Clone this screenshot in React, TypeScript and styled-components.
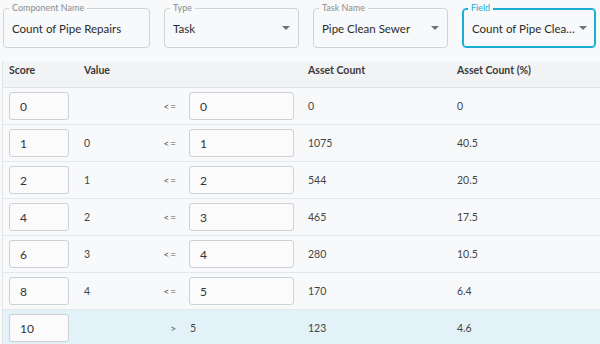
import React from 'react'
import styled, {createGlobalStyle} from 'styled-components'

const GlobalStyle = createGlobalStyle`
  html, body {
    margin: 0;
    padding: 0;
    background: #f8f9fa;
    font-family: Lato, 'Open Sans', sans-serif;
    color: #333;
  }
`

const Page = styled.div`
  width: 600px;
  height: 344px;
  overflow: hidden;
  background: #f8f9fa;
`

const FieldBar = styled.div`
  display: flex;
  gap: 14px;
  padding: 8px 3px 0 3px;
  height: 62px;
  box-sizing: border-box;
`

const FieldBox = styled.div<{$width: number; $active?: boolean}>`
  position: relative;
  width: ${(p) => p.$width}px;
  height: 40px;
  box-sizing: border-box;
  border: 1px solid ${(p) => (p.$active ? '#1aaed3' : '#cfd2d6')};
  box-shadow: ${(p) => (p.$active ? 'inset 0 0 0 1px #1aaed3' : 'none')};
  border-radius: 4px;
  display: flex;
  align-items: center;
  padding: 0 6px 0 ${(p) => (p.$active ? 9 : 8)}px;
  background: #f8f9fa;
`

const FieldLabel = styled.span<{$active?: boolean}>`
  position: absolute;
  top: -7px;
  left: 5px;
  padding: 0 3px;
  background: #f8f9fa;
  font-size: 9px;
  line-height: 12px;
  color: ${(p) => (p.$active ? '#1aaed3' : '#8a8d91')};
`

const FieldValue = styled.span`
  flex: 1;
  min-width: 0;
  font-size: 11.5px;
  color: #2b2b2b;
  white-space: nowrap;
  overflow: hidden;
  text-overflow: ellipsis;
  padding-top: 1px;
`

const Caret = styled.span`
  flex: none;
  width: 0;
  height: 0;
  border-left: 4px solid transparent;
  border-right: 4px solid transparent;
  border-top: 4px solid #6f7276;
  margin-left: 3px;
  margin-right: 2px;
`

const Table = styled.div`
  margin-left: 2px;
  border-left: 1px solid #e3e4e6;
`

const cols = '75px 76px 29px 119px 149px 1fr'

const HeaderRow = styled.div`
  display: grid;
  grid-template-columns: ${cols};
  align-items: start;
  height: 26px;
  box-sizing: border-box;
  padding: 2px 0 0 6px;
  line-height: 13px;
  background: #f2f3f4;
  border-bottom: 1px solid #e1e2e4;
  font-size: 10.5px;
  font-weight: 700;
  color: #3a3a3a;
`

const Row = styled.div<{$highlight?: boolean}>`
  display: grid;
  grid-template-columns: ${cols};
  align-items: center;
  height: 37px;
  box-sizing: border-box;
  padding-left: 6px;
  background: ${(p) => (p.$highlight ? '#e3f1f8' : '#f8f9fa')};
  border-bottom: 1px solid ${(p) => (p.$highlight ? 'transparent' : '#e6e7e9')};
  font-size: 10.5px;
  color: #444;
`

const Cell = styled.div`
  white-space: nowrap;
`

const Operator = styled.div`
  font-size: 10px;
  color: #555;
  text-align: right;
  padding-right: 12px;
  letter-spacing: 1px;
`

const InputBox = styled.div<{$width: number}>`
  width: ${(p) => p.$width}px;
  height: 28px;
  box-sizing: border-box;
  border: 1px solid #cdd0d4;
  border-radius: 3px;
  background: #fbfbfc;
  display: flex;
  align-items: center;
  padding-left: 10px;
  font-size: 12px;
  color: #333;
`

const PlainValue = styled.div`
  font-size: 10.5px;
  color: #444;
  padding-left: 1px;
`

const fields = [
  {label: 'Component Name', value: 'Count of Pipe Repairs', width: 147},
  {label: 'Type', value: 'Task', width: 135, select: true},
  {label: 'Task Name', value: 'Pipe Clean Sewer', width: 135, select: true},
  {label: 'Field', value: 'Count of Pipe Clean Sewer', width: 134, select: true, active: true},
]

const rows = [
  {score: '0', value: '', max: '0', count: '0', pct: '0'},
  {score: '1', value: '0', max: '1', count: '1075', pct: '40.5'},
  {score: '2', value: '1', max: '2', count: '544', pct: '20.5'},
  {score: '4', value: '2', max: '3', count: '465', pct: '17.5'},
  {score: '6', value: '3', max: '4', count: '280', pct: '10.5'},
  {score: '8', value: '4', max: '5', count: '170', pct: '6.4'},
]

export default function App() {
  return (
    <Page>
      <GlobalStyle />
      <FieldBar>
        {fields.map((f) => (
          <FieldBox key={f.label} $width={f.width} $active={f.active}>
            <FieldLabel $active={f.active}>{f.label}</FieldLabel>
            <FieldValue>{f.value}</FieldValue>
            {f.select ? <Caret /> : null}
          </FieldBox>
        ))}
      </FieldBar>
      <Table>
        <HeaderRow>
          <Cell>Score</Cell>
          <Cell>Value</Cell>
          <Cell />
          <Cell />
          <Cell>Asset Count</Cell>
          <Cell>Asset Count (%)</Cell>
        </HeaderRow>
        {rows.map((r) => (
          <Row key={r.score}>
            <Cell>
              <InputBox $width={60}>{r.score}</InputBox>
            </Cell>
            <Cell>{r.value}</Cell>
            <Operator>{'<='}</Operator>
            <Cell>
              <InputBox $width={105}>{r.max}</InputBox>
            </Cell>
            <Cell>{r.count}</Cell>
            <Cell>{r.pct}</Cell>
          </Row>
        ))}
        <Row $highlight>
          <Cell>
            <InputBox $width={60}>10</InputBox>
          </Cell>
          <Cell />
          <Operator>{'>'}</Operator>
          <PlainValue>5</PlainValue>
          <Cell>123</Cell>
          <Cell>4.6</Cell>
        </Row>
      </Table>
    </Page>
  )
}
